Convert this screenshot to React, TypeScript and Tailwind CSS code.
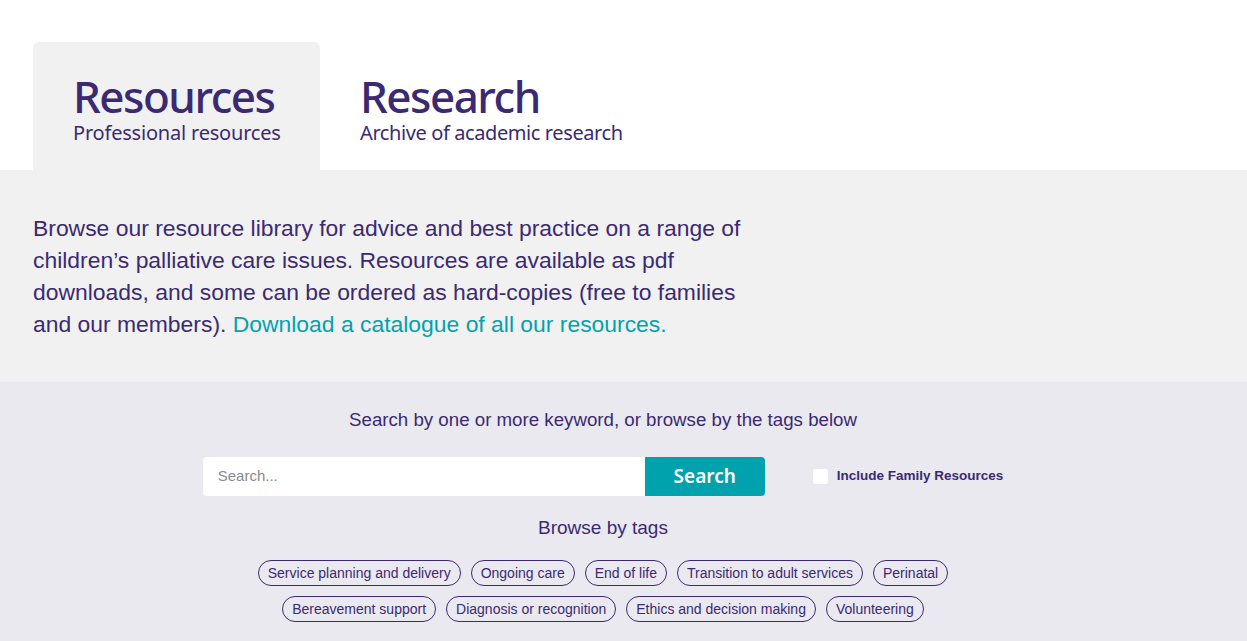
import React from "react";

const tags1 = [
  "Service planning and delivery",
  "Ongoing care",
  "End of life",
  "Transition to adult services",
  "Perinatal",
];
const tags2 = [
  "Bereavement support",
  "Diagnosis or recognition",
  "Ethics and decision making",
  "Volunteering",
];

const head = { fontFamily: '"Noto Sans", sans-serif' };
const body = { fontFamily: '"Liberation Sans", Arial, sans-serif' };

export default function App() {
  return (
    <div className="min-h-screen bg-white text-[#3b2a72]" style={body}>
      <div className="pt-[42px] px-[33px] flex">
        <div className="w-[287px] h-[128px] bg-[#f1f1f1] rounded-t-[6px] pl-[40px] pt-[28px]">
          <div className="text-[44px] leading-[52px] tracking-[-1.5px] font-medium" style={head}>Resources</div>
          <div className="text-[20px] leading-[22px] tracking-[-0.2px]" style={head}>Professional resources</div>
        </div>
        <div className="pl-[40px] pt-[28px]">
          <div className="text-[44px] leading-[52px] tracking-[-1.5px] font-medium" style={head}>Research</div>
          <div className="text-[20px] leading-[22px] tracking-[-0.4px]" style={head}>Archive of academic research</div>
        </div>
      </div>
      <div className="bg-[#f1f1f1] h-[212px] px-[33px] pt-[42px]">
        <p className="w-[726px] text-[22.9px] leading-[32px]">
          Browse our resource library for advice and best practice on a range of children’s palliative care issues. Resources are available as pdf downloads, and some can be ordered as hard-copies (free to families and our members).{" "}
          <a className="text-[#00a3ad]">Download a catalogue of all our resources.</a>
        </p>
      </div>
      <div className="bg-[#eae9ef] pb-[20px]">
        <div className="ml-[33px] w-[1140px] flex flex-col items-center pt-[28px]">
          <div className="text-[18.7px] leading-[20px]">Search by one or more keyword, or browse by the tags below</div>
          <div className="flex items-center mt-[27px]">
            <div className="w-[442px] h-[39px] bg-white rounded-l-[4px] flex items-center pl-[15px] text-[15px] text-[#8a8a8a]">Search...</div>
            <div className="w-[120px] h-[39px] bg-[#00a3ad] rounded-r-[4px] flex items-center justify-center text-white text-[19px] font-semibold" style={head}>Search</div>
            <div className="ml-[48px] w-[15px] h-[15px] bg-white rounded-[2px]"></div>
            <div className="ml-[9px] text-[13.5px] font-semibold">Include Family Resources</div>
          </div>
          <div className="text-[19px] leading-[22px] mt-[21px]">Browse by tags</div>
          <div className="flex flex-col items-center gap-[10px] mt-[21px]">
            <div className="flex gap-[10px]">
              {tags1.map((t) => (
                <span key={t} className="border border-[#3b2a72] rounded-full h-[26px] px-[9px] flex items-center text-[14px]">{t}</span>
              ))}
            </div>
            <div className="flex gap-[10px]">
              {tags2.map((t) => (
                <span key={t} className="border border-[#3b2a72] rounded-full h-[26px] px-[9px] flex items-center text-[14px]">{t}</span>
              ))}
            </div>
          </div>
        </div>
      </div>
    </div>
  );
}
